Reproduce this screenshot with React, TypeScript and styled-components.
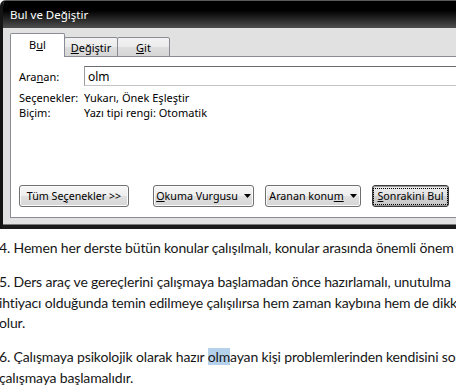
import React from "react";
import styled, { createGlobalStyle } from "styled-components";

const Global = createGlobalStyle`
  html, body { margin: 0; padding: 0; background: #fff; overflow: hidden; }
  #root { width: 456px; height: 387px; overflow: hidden; }
`;

const Page = styled.div`
  width: 456px;
  height: 387px;
  overflow: hidden;
  background: #fff;
  display: flex;
  flex-direction: column;
`;

const Window = styled.div`
  width: 490px;
  flex: none;
  display: flex;
  flex-direction: column;
  border-left: 3px solid #151515;
  border-top-left-radius: 6px;
  border-bottom: 4px solid #1a1a1a;
  box-shadow: inset 0 -1px 0 #7a7a7a;
  background: #e1e1e1;
  overflow: hidden;
`;

const TitleBar = styled.div`
  height: 28px;
  border-top: 1px solid #5a5a5a;
  background: linear-gradient(#000 0%, #000 35%, #2a2a2a 70%, #4e4e4e 100%);
  color: #fff;
  font-family: "Noto Sans", "Open Sans", sans-serif;
  font-size: 11.5px;
  display: flex;
  align-items: center;
  padding-left: 7px;
  padding-bottom: 1px;
  box-sizing: border-box;
`;

const Client = styled.div`
  padding: 5px 0 7px 7px;
  display: flex;
  flex-direction: column;
  font-family: "Noto Sans", "DejaVu Sans", sans-serif;
  font-size: 11px;
  color: #000;
`;

const TabStrip = styled.div`
  display: flex;
  align-items: flex-end;
  height: 24px;
  margin-bottom: -1px;
  position: relative;
  z-index: 1;
`;

const Tab = styled.div<{ $active?: boolean; $w: number }>`
  width: ${(p) => p.$w}px;
  box-sizing: border-box;
  height: ${(p) => (p.$active ? 24 : 20)}px;
  border: 1px solid #898c95;
  border-bottom: ${(p) => (p.$active ? "none" : "1px solid #898c95")};
  margin-left: ${(p) => (p.$active ? 0 : -1)}px;
  background: ${(p) =>
    p.$active ? "#fff" : "linear-gradient(#f3f3f3 0%, #ebebeb 50%, #dedede 51%, #d6d6d6 100%)"};
  border-radius: 2px 2px 0 0;
  display: flex;
  align-items: center;
  justify-content: center;
  padding-bottom: ${(p) => (p.$active ? 3 : 0)}px;
  &:first-child { margin-left: 0; }
`;

const Panel = styled.div`
  height: 162px;
  box-sizing: border-box;
  border: 1px solid #898c95;
  border-right: none;
  background: #fff;
  display: flex;
  flex-direction: column;
  padding: 9px 0 10px 8px;
`;

const FieldRow = styled.div`
  display: flex;
  align-items: center;
  height: 20px;
`;

const Label = styled.div`
  width: 65px;
  flex: none;
`;

const Input = styled.div`
  flex: 1;
  height: 20px;
  box-sizing: border-box;
  border: 1px solid;
  border-color: #6c6c6c #b8b8b8 #c4c4c4 #9c9c9c;
  display: flex;
  align-items: center;
  padding-left: 3px;
  font-size: 12px;
`;

const InfoList = styled.div`
  margin-top: 4px;
  display: flex;
  flex-direction: column;
`;

const InfoRow = styled.div`
  display: flex;
  height: 15px;
  align-items: center;
`;

const ButtonRow = styled.div`
  margin-top: auto;
  display: flex;
  gap: 11px;
`;

const Button = styled.div<{ $w: number; $gapBefore?: number; $default?: boolean }>`
  width: ${(p) => p.$w}px;
  height: 22px;
  box-sizing: border-box;
  margin-left: ${(p) => p.$gapBefore ?? 0}px;
  border: 1px solid ${(p) => (p.$default ? "#3a3a3a" : "#707070")};
  border-radius: 3px;
  background: ${(p) =>
    p.$default
      ? "linear-gradient(#ececec 0%, #e2e2e2 50%, #d2d2d2 51%, #c8c8c8 100%)"
      : "linear-gradient(#f6f6f6 0%, #eeeeee 50%, #e0e0e0 51%, #d6d6d6 100%)"};
  box-shadow: inset 0 0 0 1px ${(p) => (p.$default ? "#9a9a9a" : "#fbfbfb")};
  display: flex;
  align-items: center;
  justify-content: center;
  gap: 6px;
  white-space: nowrap;
  font-size: 10.7px;
`;

const FocusRect = styled.span`
  border: 1px dotted #000;
  padding: 1px 3px;
  line-height: 13px;
`;

const Arrow = () => (
  <svg width="7" height="4" viewBox="0 0 7 4">
    <path d="M0 0 L7 0 L3.5 4 Z" fill="#000" />
  </svg>
);

const Doc = styled.div`
  padding: 9px 0 0 0;
  margin-left: -1px;
  font-family: "Lato", "Noto Sans", sans-serif;
  font-size: 14px;
  letter-spacing: -0.15px;
  line-height: 20.6px;
  color: #161616;
`;

const Para = styled.div`
  margin-bottom: 13.4px;
`;

const Line = styled.div`
  white-space: nowrap;
  overflow: hidden;
`;

const Hit = styled.span`
  background: #b6d1ec;
`;

export default function App() {
  return (
    <Page>
      <Global />
      <Window>
        <TitleBar>Bul ve Değiştir</TitleBar>
        <Client>
          <TabStrip>
            <Tab $active $w={55}>
              <span>B<u>u</u>l</span>
            </Tab>
            <Tab $w={54}>
              <span><u>D</u>eğiştir</span>
            </Tab>
            <Tab $w={53}>
              <span><u>G</u>it</span>
            </Tab>
          </TabStrip>
          <Panel>
            <FieldRow>
              <Label>Ara<u>n</u>an:</Label>
              <Input>olm</Input>
            </FieldRow>
            <InfoList>
              <InfoRow>
                <Label>Seçenekler:</Label>
                <span>Yukarı, Önek Eşleştir</span>
              </InfoRow>
              <InfoRow>
                <Label>Biçim:</Label>
                <span>Yazı tipi rengi: Otomatik</span>
              </InfoRow>
            </InfoList>
            <ButtonRow>
              <Button $w={110}>
                <span>Tüm Se<u>ç</u>enekler &gt;&gt;</span>
              </Button>
              <Button $w={101} $gapBefore={13}>
                <span><u>O</u>kuma Vurgusu</span>
                <Arrow />
              </Button>
              <Button $w={96}>
                <span>Aranan konu<u>m</u></span>
                <Arrow />
              </Button>
              <Button $w={77} $default>
                <FocusRect><u>S</u>onrakini Bul</FocusRect>
              </Button>
            </ButtonRow>
          </Panel>
        </Client>
      </Window>
      <Doc>
        <Para>
          <Line>4. Hemen her derste bütün konular çalışılmalı, konular arasında önemli önem</Line>
        </Para>
        <Para>
          <Line>5. Ders araç ve gereçlerini çalışmaya başlamadan önce hazırlamalı, unutulma</Line>
          <Line>ihtiyacı olduğunda temin edilmeye çalışılırsa hem zaman kaybına hem de dikk</Line>
          <Line>olur.</Line>
        </Para>
        <Para>
          <Line>6. Çalışmaya psikolojik olarak hazır <Hit>olm</Hit>ayan kişi problemlerinden kendisini so</Line>
          <Line>çalışmaya başlamalıdır.</Line>
        </Para>
      </Doc>
    </Page>
  );
}
